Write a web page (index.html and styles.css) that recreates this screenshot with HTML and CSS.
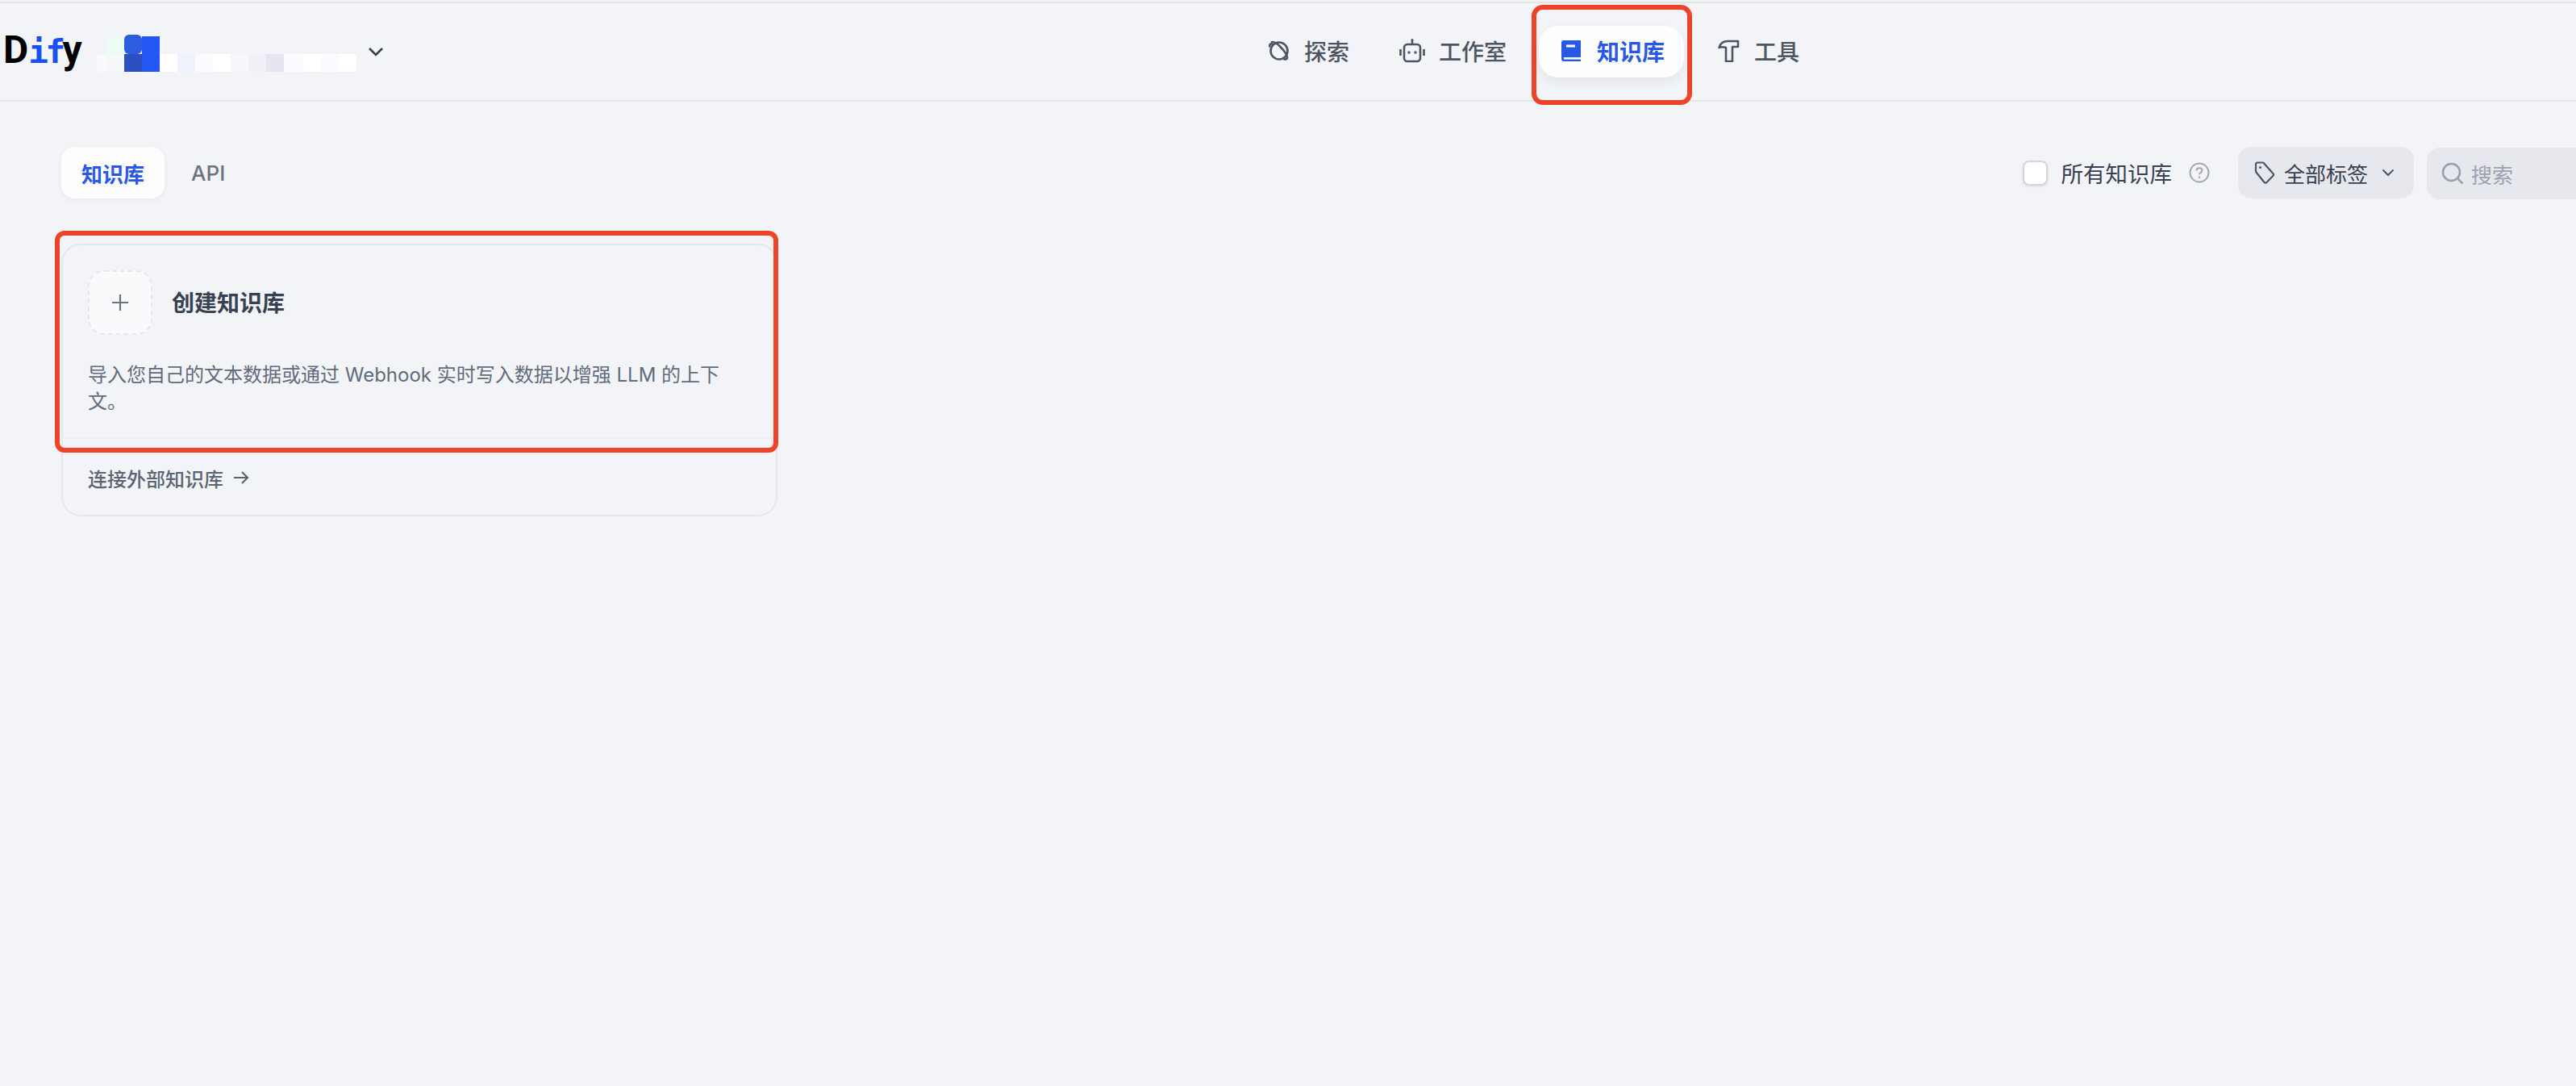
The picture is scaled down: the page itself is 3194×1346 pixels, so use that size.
FILE: index.html
```html
<!DOCTYPE html>
<html lang="zh-CN">
<head>
    <meta charset="UTF-8">
    <meta name="viewport" content="width=device-width, initial-scale=1.0">
    <title>Dify - 知识库</title>
    <link rel="stylesheet" href="styles.css">
</head>
<body>

    <header class="navbar">
        <div class="brand">
            <div class="logo">D<span class="logo-if">if</span>y</div>
            <svg class="workspace" width="332" height="46" viewBox="0 0 332 46">
                <rect x="12" y="3" width="22" height="22" fill="#ebfcf3"/>
                <rect x="34" y="0" width="22" height="24" rx="6" fill="#2e5ce0"/>
                <rect x="56" y="2" width="22" height="22" fill="#2356f5"/>
                <rect x="0" y="24" width="12" height="22" rx="4" fill="#f9fafb"/>
                <rect x="12" y="24" width="22" height="22" fill="#f6f8fa"/>
                <rect x="34" y="24" width="22" height="22" fill="#2d4fc0"/>
                <rect x="56" y="24" width="22" height="22" fill="#2356f5"/>
                <rect x="78" y="24" width="22" height="22" fill="#ffffff"/>
                <rect x="100" y="24" width="22" height="22" fill="#eff1fb"/>
                <rect x="122" y="24" width="22" height="22" fill="#fbfbfe"/>
                <rect x="144" y="24" width="22" height="22" fill="#ffffff"/>
                <rect x="166" y="24" width="22" height="22" fill="#f6f7fd"/>
                <rect x="188" y="24" width="22" height="22" fill="#f0f1f6"/>
                <rect x="210" y="24" width="22" height="22" fill="#e5e6ef"/>
                <rect x="232" y="24" width="24" height="22" fill="#fbfbfe"/>
                <rect x="256" y="24" width="22" height="22" fill="#ffffff"/>
                <rect x="278" y="24" width="22" height="22" fill="#fcfcff"/>
                <rect x="300" y="24" width="22" height="22" fill="#ffffff"/>
            </svg>
            <svg class="brand-chevron" width="20" height="14" viewBox="0 0 20 14" fill="none" stroke="#374151" stroke-width="2.6">
                <path d="M2 3l8 8 8-8"/>
            </svg>
        </div>
        <nav class="nav">
            <a class="nav-item nav-explore">
                <svg class="nav-icon" viewBox="0 0 28 28" fill="none" stroke="#4b5563" stroke-width="2.6">
                    <circle cx="14" cy="14" r="10.5"/>
                    <path d="M4 3.5c3-1.5 7 1 11.500 5.500s8 9 8.500 13c.3 2.500-2 3-4.500 2"/>
                    <path d="M6.500 6.500c-3-3-5 0-4 3"/>
                </svg>
                探索
            </a>
            <a class="nav-item nav-robot">
                <svg class="nav-icon" viewBox="0 0 32 32" fill="none" stroke="#4b5563" stroke-width="2.600">
                    <rect x="6" y="8" width="20" height="21" rx="4"/>
                    <path d="M16 8V3M1.500 14v8M30.500 14v8"/>
                    <circle cx="16" cy="2.500" r="1.500" fill="#4b5563" stroke="none"/>
                    <circle cx="12" cy="18" r="1.700" fill="#4b5563" stroke="none"/>
                    <circle cx="20" cy="18" r="1.700" fill="#4b5563" stroke="none"/>
                </svg>
                工作室
            </a>
            <a class="nav-item active">
                <svg class="nav-icon" viewBox="0 0 28 28">
                    <path fill="#2a58e6" d="M5 1h21v21H5a3 3 0 0 0-3 2.500V4a3 3 0 0 1 3-3z"/>
                    <path fill="#2a58e6" d="M2 24c0-1 1.200-2 3-2v2h21v3H5a3 3 0 0 1-3-3z"/>
                    <rect x="8" y="6.500" width="11" height="3" fill="#fff"/>
                    <rect x="5" y="23.600" width="21" height="1" fill="#fff"/>
                </svg>
                知识库
            </a>
            <a class="nav-item">
                <svg class="nav-icon" viewBox="0 0 28 28" fill="none" stroke="#4b5563" stroke-width="2.600" stroke-linejoin="round">
                    <path d="M1.500 10C3 5 7 2 12 2h13v7h-7v18h-8V10C7 9 4 9 1.500 10z"/>
                </svg>
                工具
            </a>
        </nav>
    </header>

    <main class="main">
        <div class="toolbar">
            <div class="tabs">
                <div class="tab active">知识库</div>
                <div class="tab">API</div>
            </div>
            <div class="filters">
                <label class="all-check">
                    <span class="checkbox"></span>
                    所有知识库
                </label>
                <svg class="help" width="26" height="26" viewBox="0 0 26 26" fill="none" stroke="#a3a8b3" stroke-width="2">
                    <circle cx="13" cy="13" r="11.500"/>
                    <path d="M9.500 10.500c0-2 1.500-3.200 3.500-3.200s3.500 1.200 3.500 3c0 2.700-3.500 2.500-3.500 5"/>
                    <circle cx="13" cy="18.800" r="1.300" fill="#a3a8b3" stroke="none"/>
                </svg>
                <div class="tag-filter">
                    <svg width="26" height="28" viewBox="0 0 26 28" fill="none" stroke="#4b5563" stroke-width="2.200" stroke-linejoin="round">
                        <path d="M2 3.500A2 2 0 0 1 4 1.500h6.500a2 2 0 0 1 1.500.7l11.500 13a2 2 0 0 1 0 2.600L15.500 26a2 2 0 0 1-3 0L2.500 13.500a2 2 0 0 1-.5-1.300z"/>
                        <circle cx="7.500" cy="7.500" r="1.600" fill="#4b5563" stroke="none"/>
                    </svg>
                    <span class="tag-label">全部标签</span>
                    <svg width="16" height="10" viewBox="0 0 16 10" fill="none" stroke="#4b5563" stroke-width="2">
                        <path d="M1.500 1.500L8 8l6.500-6.500"/>
                    </svg>
                </div>
                <div class="search">
                    <svg width="28" height="28" viewBox="0 0 28 28" fill="none" stroke="#98a0ae" stroke-width="2.600">
                        <circle cx="12.500" cy="12.500" r="10.500"/>
                        <path d="M20 20l6.500 6.500"/>
                    </svg>
                    <span>搜索</span>
                </div>
            </div>
        </div>

        <section class="create-card">
            <div class="create-body">
                <div class="create-head">
                    <div class="plus-box">
                        <svg width="20" height="20" viewBox="0 0 20 20" stroke="#6b7280" stroke-width="2.200">
                            <path d="M10 0v20M0 10h20"/>
                        </svg>
                    </div>
                    <div class="create-title">创建知识库</div>
                </div>
                <p class="create-desc">导入您自己的文本数据或通过 Webhook 实时写入数据以增强 LLM 的上下文。</p>
            </div>
            <a class="create-foot">
                连接外部知识库
                <svg width="20" height="18" viewBox="0 0 20 18" fill="none" stroke="#5b6472" stroke-width="2.200">
                    <path d="M1 9h17M11 2l7 7-7 7"/>
                </svg>
            </a>
        </section>
    </main>

    <!-- red marks drawn over the screenshot -->
    <div class="mark mark-nav"></div>
    <div class="mark mark-card"></div>

</body>
</html>
```

FILE: styles.css
```css
* {
    box-sizing: border-box;
}
html, body {
    height: 100%;
}
body {
    font-family: 'Inter', 'Noto Sans CJK SC', sans-serif;
    margin: 0;
    padding: 2px 0 0;
    background-color: #f2f4f8;
    background-clip: content-box;
    color: #374151;
    overflow: hidden;
    position: relative;
}
.navbar {
    height: 124px;
    border-top: 2px solid #e3e4de;
    border-bottom: 2px solid #e5e7eb;
    display: flex;
    align-items: center;
}
.brand {
    width: 1546px;
    height: 100%;
    display: flex;
    align-items: flex-start;
    flex-shrink: 0;
}
.logo {
    font-family: 'Roboto', sans-serif;
    font-size: 48px;
    font-weight: 700;
    line-height: 56px;
    color: #000;
    margin: 30px 0 0 4px;
    width: 116px;
}
.logo-if {
    font-family: 'DejaVu Sans Mono', monospace;
    font-size: 41px;
    color: #1c4ff0;
    letter-spacing: -3.500px;
}
.workspace {
    margin-top: 39px;
}
.brand-chevron {
    margin: 53px 0 0 4px;
}
.nav {
    display: flex;
    align-items: center;
    gap: 16px;
}
.nav-item {
    height: 64px;
    padding: 0 26px 2px;
    display: flex;
    align-items: center;
    gap: 17px;
    border-radius: 24px;
    font-size: 28px;
    font-weight: 500;
    color: #4b5563;
}
.nav-explore {
    padding-right: 20px;
}
.nav-icon {
    width: 28px;
    height: 28px;
    flex-shrink: 0;
}
.nav-robot {
    padding-right: 24px;
}
.nav-robot .nav-icon {
    width: 32px;
    height: 32px;
}
.nav-item.active {
    padding-right: 24px;
    gap: 18px;
    background-color: #fdfdfe;
    color: #2a58e6;
    font-weight: 600;
    box-shadow: 0 6px 14px rgba(16, 24, 40, 0.07);
}
.main {
    padding: 56px 0 0 76px;
}
.toolbar {
    display: flex;
    align-items: flex-start;
    justify-content: space-between;
}
.tabs {
    display: flex;
    align-items: center;
    gap: 8px;
}
.tab {
    height: 64px;
    padding: 0 25px;
    display: flex;
    align-items: center;
    border-radius: 16px;
    font-size: 26px;
    font-weight: 500;
    color: #6b7280;
}
.tab.active {
    background-color: #fdfdfe;
    color: #2a58e6;
    font-weight: 600;
    box-shadow: 0 2px 6px rgba(16, 24, 40, 0.06);
}
.filters {
    display: flex;
    align-items: center;
    height: 64px;
}
.all-check {
    display: flex;
    align-items: center;
    gap: 17px;
    font-size: 27.500px;
    color: #374151;
}
.checkbox {
    width: 31px;
    height: 31px;
    background-color: #fff;
    border: 2px solid #d4d6dd;
    border-radius: 8px;
    box-shadow: 0 1px 3px rgba(16, 24, 40, 0.1);
}
.help {
    margin: 0 35px 0 21px;
}
.tag-filter {
    width: 218px;
    height: 64px;
    padding-left: 20px;
    display: flex;
    align-items: center;
    border-radius: 16px;
    background-color: #e6e8ed;
    font-size: 26px;
    color: #374151;
}
.tag-label {
    margin: 0 17px 0 11px;
}
.search {
    width: 185px;
    height: 64px;
    margin: 2px 0 0 16px;
    padding-left: 18px;
    display: flex;
    align-items: center;
    gap: 9px;
    border-radius: 16px 0 0 16px;
    background-color: #e6e8ed;
    font-size: 26px;
    color: #9ca3af;
}
.create-card {
    width: 888px;
    height: 338px;
    margin-top: 56px;
    border: 2px solid #e5e7eb;
    border-radius: 24px;
    display: flex;
    flex-direction: column;
}
.create-body {
    height: 240px;
    padding: 31px;
    border-bottom: 2px solid #ebedf1;
}
.create-head {
    display: flex;
    align-items: center;
    gap: 24px;
}
.plus-box {
    width: 80px;
    height: 80px;
    display: flex;
    align-items: center;
    justify-content: center;
    background-color: #f9fafb;
    border: 2px dashed #e5e7eb;
    border-radius: 20px;
}
.create-title {
    font-size: 28px;
    font-weight: 600;
    color: #374151;
    margin-bottom: 3px;
}
.create-desc {
    margin: 33px 0 0;
    max-width: 800px;
    font-size: 24px;
    line-height: 33px;
    color: #626b7b;
}
.create-foot {
    flex: 1;
    padding: 2px 31px 0;
    display: flex;
    align-items: center;
    gap: 12px;
    font-size: 24px;
    font-weight: 500;
    color: #5b6472;
}
.mark {
    position: absolute;
    border: 6px solid #ee4327;
    pointer-events: none;
}
.mark-nav {
    left: 1899px;
    top: 6px;
    width: 199px;
    height: 124px;
    border-radius: 14px;
}
.mark-card {
    left: 68px;
    top: 286px;
    width: 897px;
    height: 275px;
    border-radius: 12px;
}
```
